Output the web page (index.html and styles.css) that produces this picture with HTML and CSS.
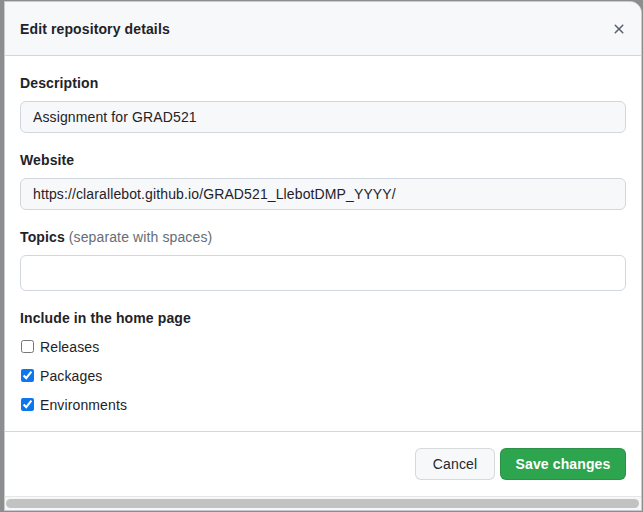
FILE: index.html
```html
<!DOCTYPE html>
<html>
<head>
<meta charset="utf-8">
<link rel="stylesheet" href="styles.css">
</head>
<body>
<div class="backdrop">
  <div class="dialog">
    <div class="dialog-header">
      <h1 class="dialog-title">Edit repository details</h1>
      <button class="close-btn" aria-label="Close">
        <svg width="16" height="16" viewBox="0 0 16 16"><path fill="#57606a" d="M3.72 3.72a.75.75 0 0 1 1.06 0L8 6.94l3.22-3.22a.749.749 0 0 1 1.275.326.749.749 0 0 1-.215.734L9.06 8l3.22 3.22a.749.749 0 0 1-.326 1.275.749.749 0 0 1-.734-.215L8 9.06l-3.22 3.22a.751.751 0 0 1-1.042-.018.751.751 0 0 1-.018-1.042L6.94 8 3.720 4.78a.75.75 0 0 1 0-1.06Z"/></svg>
      </button>
    </div>
    <div class="dialog-body">
      <div class="form-group">
        <label class="form-label">Description</label>
        <input class="form-input filled" type="text" value="Assignment for GRAD521">
      </div>
      <div class="form-group">
        <label class="form-label">Website</label>
        <input class="form-input filled" type="text" value="https://clarallebot.github.io/GRAD521_LlebotDMP_YYYY/">
      </div>
      <div class="form-group">
        <label class="form-label">Topics <span class="note">(separate with spaces)</span></label>
        <div class="form-input topics"></div>
      </div>
      <div class="form-group last">
        <div class="form-label">Include in the home page</div>
        <label class="check-row"><input type="checkbox"> Releases</label>
        <label class="check-row"><input type="checkbox" checked> Packages</label>
        <label class="check-row"><input type="checkbox" checked> Environments</label>
      </div>
    </div>
    <div class="dialog-footer">
      <button class="btn btn-cancel">Cancel</button>
      <button class="btn btn-primary">Save changes</button>
    </div>
    <div class="hscroll"><div class="hscroll-thumb"></div></div>
  </div>
</div>
</body>
</html>
```
FILE: styles.css
```css
* { box-sizing: border-box; }
html, body { margin: 0; padding: 0; }
body {
  width: 643px;
  height: 512px;
  overflow: hidden;
  background: #8d8d8d;
  font-family: "Liberation Sans", Arial, sans-serif;
  color: #1f2328;
  font-size: 14px;
  letter-spacing: 0.12px;
}
.backdrop {
  padding: 1px 0 0 4px;
}
.dialog {
  width: 638px;
  height: 510px;
  background: #fff;
  border: 1px solid #c6ccd2;
  border-radius: 0 12px 0 0;
  display: flex;
  flex-direction: column;
  overflow: hidden;
}
.dialog-header {
  height: 54px;
  flex: none;
  background: #f6f8fa;
  border-bottom: 1px solid #d0d7de;
  display: flex;
  align-items: center;
  justify-content: space-between;
  padding: 0 6px 0 15px;
}
.dialog-title {
  margin: 0;
  font-size: 14px;
  font-weight: 700;
  line-height: 20px;
}
.close-btn {
  width: 32px;
  height: 32px;
  border: 0;
  background: transparent;
  display: flex;
  align-items: center;
  justify-content: center;
  padding: 0;
}
.close-btn svg { width: 16px; height: 16px; }
.dialog-body {
  padding: 17px 15px 0 15px;
  flex: none;
  height: 376px;
  border-bottom: 1px solid #d0d7de;
}
.form-group { margin-bottom: 17px; }
.form-group.last { margin-bottom: 0; }
.form-label {
  display: block;
  font-weight: 700;
  font-size: 14px;
  line-height: 20px;
  margin-bottom: 8px;
}
.note { font-weight: 400; color: #656d76; }
.form-input {
  display: block;
  width: 100%;
  height: 32px;
  border: 1px solid #d0d7de;
  border-radius: 6px;
  padding: 0 12px;
  font-family: "Liberation Sans", Arial, sans-serif;
  font-size: 14px;
  letter-spacing: 0.12px;
  color: #1f2328;
  background: #f6f8fa;
  outline: none;
}
.form-input.topics {
  background: #fff;
  height: 36px;
}
.check-row {
  display: flex;
  align-items: center;
  height: 29px;
  font-size: 14px;
  margin-top: -4px;
  margin-bottom: 4px;
}
.check-row input {
  width: 13px;
  height: 13px;
  margin: 0 6px 0 1px;
  accent-color: #0b76ef;
}
.dialog-footer {
  flex: none;
  height: 64px;
  display: flex;
  justify-content: flex-end;
  align-items: center;
  gap: 5px;
  padding: 0 15px;
}
.btn {
  height: 32px;
  padding: 0;
  border: 1px solid rgba(31, 35, 40, 0.15);
  border-radius: 6px;
  background: #f6f8fa;
  color: #24292f;
  font-family: "Liberation Sans", Arial, sans-serif;
  font-size: 14px;
  letter-spacing: 0.12px;
  white-space: nowrap;
}
.btn-cancel { width: 80px; }
.btn-primary {
  width: 126px;
  background: #2da44e;
  color: #fff;
  font-weight: 700;
}
.hscroll {
  flex: none;
  height: 14px;
  background: #f7f7f7;
  border-top: 1px solid #e6e6e6;
  padding: 2px 2px 0 1px;
}
.hscroll-thumb {
  height: 9px;
  border-radius: 5px;
  background: #c2c2c2;
}
```
